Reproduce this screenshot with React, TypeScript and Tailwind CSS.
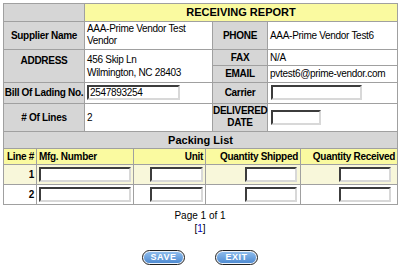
import React from "react";

const cell = "border border-[#a0a0a0]";
const label = "border border-[#a0a0a0] bg-[#d6d6d6] font-bold text-center";

function Field({ w, value }: { w: string; value?: string }) {
    return (
        <input
            readOnly
            defaultValue={value}
            className={`${w} h-[15px] border-2 border-t-[#3c3c3c] border-l-[#3c3c3c] border-r-[#d8d8d8] border-b-[#d8d8d8] bg-white px-[1px] text-[10px] leading-none outline-none align-middle`}
        />
    );
}

function PillButton({ text }: { text: string }) {
    return (
        <div className="w-[43px] h-[15px] rounded-full border border-[#1f1f1f] bg-[#eef3fa] p-px">
            <div className="w-full h-full rounded-full bg-gradient-to-b from-[#8cbbec] to-[#4f8bd1] text-white font-bold text-[9px] leading-none tracking-[0.5px] flex items-center justify-center">
                {text}
            </div>
        </div>
    );
}

export default function App() {
    return (
        <div className="w-[400px] h-[268px] overflow-hidden bg-white pt-[3px] text-black font-['Liberation_Sans',Arial,sans-serif] text-[10px] tracking-[-0.3px]">
            {/* Receiving header */}
            <table className="w-[394px] ml-[3px] border-collapse table-fixed">
                <colgroup>
                    <col className="w-[81px]" />
                    <col className="w-[128px]" />
                    <col className="w-[55px]" />
                    <col className="w-[130px]" />
                </colgroup>
                <tbody>
                    <tr className="h-[17px]">
                        <td className={label}></td>
                        <td
                            colSpan={3}
                            className="border border-[#a0a0a0] bg-[#fafaa0] font-bold text-center text-[11px] tracking-normal"
                        >
                            RECEIVING REPORT
                        </td>
                    </tr>
                    <tr className="h-[28px]">
                        <td className={label}>Supplier Name</td>
                        <td className={`${cell} pl-[2px] leading-[12px]`}>
                            AAA-Prime Vendor Test
                            <br />
                            Vendor
                        </td>
                        <td className={label}>PHONE</td>
                        <td className={`${cell} pl-[2px]`}>AAA-Prime Vendor Test6</td>
                    </tr>
                    <tr className="h-[14px]">
                        <td rowSpan={2} className={`${label} align-top pt-[3px]`}>
                            ADDRESS
                        </td>
                        <td rowSpan={2} className={`${cell} pl-[2px] leading-[13px]`}>
                            456 Skip Ln
                            <br />
                            Wilmington, NC 28403
                        </td>
                        <td className={label}>FAX</td>
                        <td className={`${cell} pl-[2px]`}>N/A</td>
                    </tr>
                    <tr className="h-[17px]">
                        <td className={label}>EMAIL</td>
                        <td className={`${cell} pl-[2px]`}>pvtest6@prime-vendor.com</td>
                    </tr>
                    <tr className="h-[21px]">
                        <td className={label}>Bill Of Lading No.</td>
                        <td className={`${cell} pl-[2px]`}>
                            <Field w="w-[93px]" value="2547893254" />
                        </td>
                        <td className={label}>Carrier</td>
                        <td className={`${cell} pl-[3px]`}>
                            <Field w="w-[91px]" />
                        </td>
                    </tr>
                    <tr className="h-[28px]">
                        <td className={label}># Of Lines</td>
                        <td className={`${cell} pl-[2px]`}>2</td>
                        <td className={`${label} leading-[12px]`}>
                            DELIVERED
                            <br />
                            DATE
                        </td>
                        <td className={`${cell} pl-[3px]`}>
                            <Field w="w-[50px]" />
                        </td>
                    </tr>
                </tbody>
            </table>

            {/* Packing list */}
            <table className="w-[394px] ml-[3px] border-collapse table-fixed">
                <colgroup>
                    <col className="w-[33px]" />
                    <col className="w-[97px]" />
                    <col className="w-[72px]" />
                    <col className="w-[95px]" />
                    <col className="w-[97px]" />
                </colgroup>
                <tbody>
                    <tr className="h-[17px]">
                        <td
                            colSpan={5}
                            className="border border-t-0 border-[#a0a0a0] bg-[#d6d6d6] font-bold text-center text-[11px] tracking-normal"
                        >
                            Packing List
                        </td>
                    </tr>
                    <tr className="h-[16px] bg-[#fafaa0] font-bold">
                        <td className={`${cell} text-right pr-[2px]`}>Line #</td>
                        <td className={`${cell} pl-[2px]`}>Mfg. Number</td>
                        <td className={`${cell} text-right pr-[2px]`}>Unit</td>
                        <td className={`${cell} text-right pr-[2px]`}>Quantity Shipped</td>
                        <td className={`${cell} text-right pr-[2px]`}>Quantity Received</td>
                    </tr>
                    {["1", "2"].map((n) => (
                        <tr
                            key={n}
                            className={n === "1" ? "h-[20px] bg-[#f8f7da]" : "h-[20px] bg-white"}
                        >
                            <td className={`${cell} text-right pr-[2px] font-bold`}>{n}</td>
                            <td className={`${cell} pl-[2px]`}>
                                <Field w="w-[92px]" />
                            </td>
                            <td className={`${cell} text-right pr-[2px]`}>
                                <Field w="w-[53px]" />
                            </td>
                            <td className={`${cell} text-right pr-[3px]`}>
                                <Field w="w-[52px]" />
                            </td>
                            <td className={`${cell} text-right pr-[6px]`}>
                                <Field w="w-[52px]" />
                            </td>
                        </tr>
                    ))}
                </tbody>
            </table>

            {/* Paging */}
            <div className="mt-[4px] text-center leading-[13px] tracking-normal">
                <div>Page 1 of 1</div>
                <div>
                    [<span className="text-[#0000cc]">1</span>]
                </div>
            </div>

            {/* Actions */}
            <div className="mt-[15px] flex justify-center gap-[30px]">
                <PillButton text="SAVE" />
                <PillButton text="EXIT" />
            </div>
        </div>
    );
}
